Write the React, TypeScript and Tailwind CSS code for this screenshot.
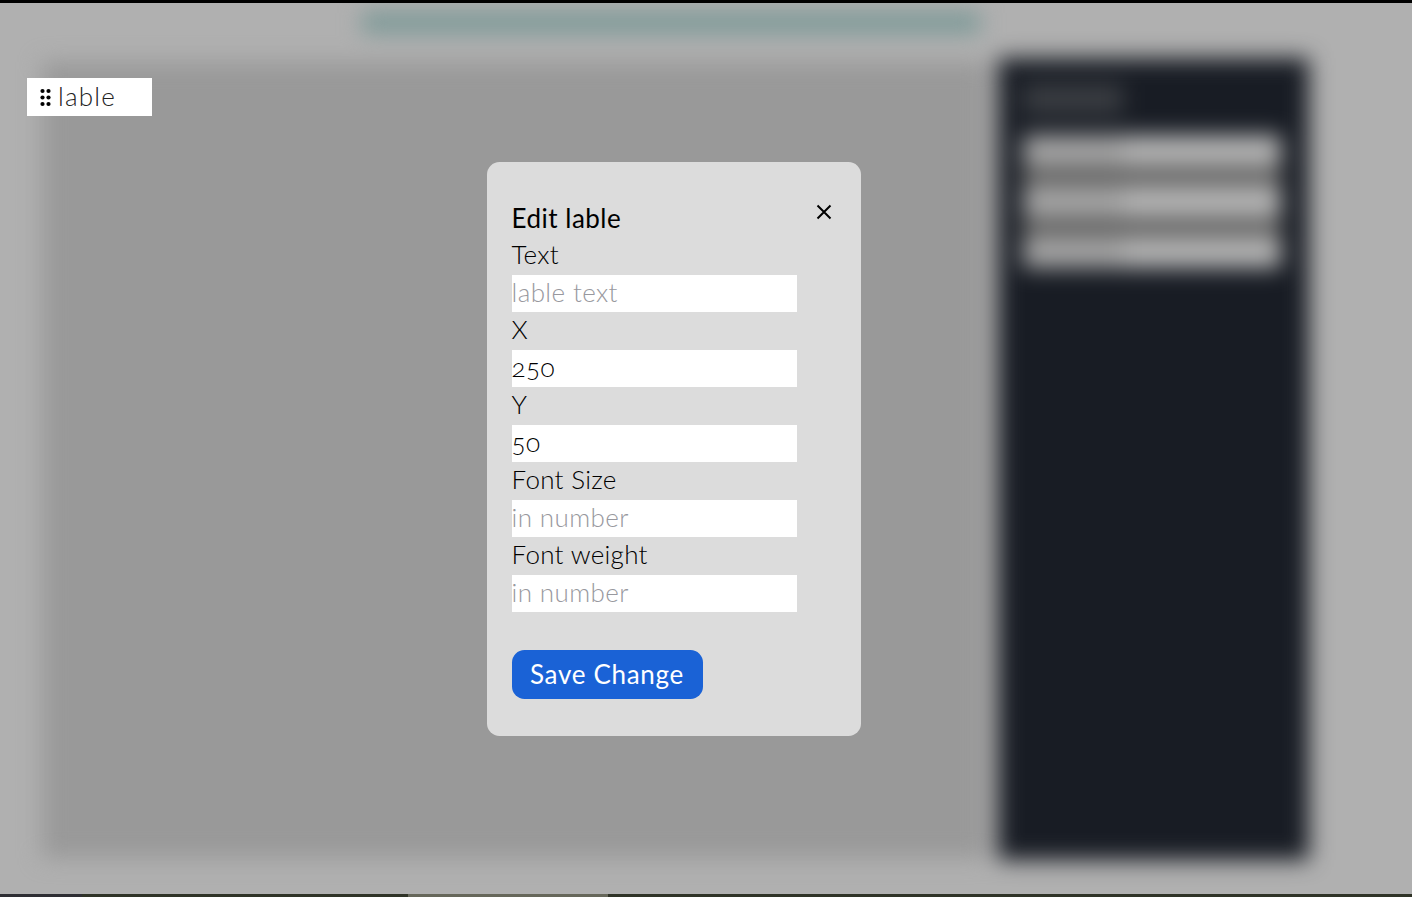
const font = { fontFamily: '"Lato", "Noto Sans", sans-serif' };

function Field({ label, placeholder, value }: { label: string; placeholder?: string; value?: string }) {
  return (
    <div className="flex flex-col">
      <label className="h-[37.5px] text-[26px] leading-[34px] font-light tracking-[0.3px] text-black">{label}</label>
      <input
        readOnly
        placeholder={placeholder}
        value={value ?? ""}
        className="h-[37.5px] w-[285px] bg-white p-0 pb-[2px] text-[26px] font-light tracking-[0.4px] text-black oldstyle-nums outline-none placeholder:text-[#98989e]"
      />
    </div>
  );
}

function SideInput() {
  return (
    <div className="flex h-[31px] w-[258px] rounded-[4px] bg-[#b4b4b4]">
      <div className="h-full w-[100px] rounded-l-[4px] bg-[#a4a4a4]" />
    </div>
  );
}

export default function App() {
  return (
    <div className="relative flex h-[897px] w-[1412px] flex-col overflow-hidden bg-[#b0b0b0]" style={font}>
      <div className="z-10 h-[3px] w-full shrink-0 bg-black" />

      <div className="flex min-h-0 flex-1 flex-col blur-[11px]">
        <div className="flex h-[55px] shrink-0 justify-start pl-[362px] pt-[9px]">
          <div className="h-[21px] w-[618px] bg-[#7b9997]" />
        </div>
        <div className="flex h-[802px] shrink-0 gap-[11px] pl-[42px]">
          <div className="mt-[4px] mb-[2px] w-[945px] bg-[#999999]" />
          <div className="flex h-full w-[311px] flex-col bg-[#181c24] px-[25px] pt-[26px]">
            <div className="mb-[21px] h-[30px] w-[100px] bg-[#3a3d42]" />
            <div className="flex w-[258px] flex-col gap-[20px] bg-[#606060]">
              <SideInput />
              <SideInput />
              <SideInput />
            </div>
          </div>
        </div>
      </div>

      <div className="z-10 flex h-[3px] w-full shrink-0">
        <div className="w-[82px] bg-[#2e2e33]" />
        <div className="w-[326px] bg-[#2f3327]" />
        <div className="w-[200px] bg-[#66675a]" />
        <div className="flex-1 bg-[#2f3327]" />
      </div>

      <div className="absolute left-[27px] top-[78px] flex h-[38px] w-[125px] items-center bg-white pl-[12px]">
        <svg width="13" height="19" viewBox="0 0 13 19" className="shrink-0 text-black" fill="currentColor">
          <circle cx="3.5" cy="3" r="2.1" />
          <circle cx="9.5" cy="3" r="2.1" />
          <circle cx="3.5" cy="9.5" r="2.1" />
          <circle cx="9.5" cy="9.5" r="2.1" />
          <circle cx="3.5" cy="16" r="2.1" />
          <circle cx="9.5" cy="16" r="2.1" />
        </svg>
        <span className="ml-[6px] text-[26px] font-light leading-[37.5px] tracking-[1.2px] text-[#222222]">lable</span>
      </div>

      <div className="absolute left-[486.5px] top-[162px] h-[574px] w-[374.5px] rounded-[12.5px] bg-[#dcdcdc] px-[25px] py-[37.5px]">
        <button className="absolute right-[28.5px] top-[41px] text-black" aria-label="Close">
          <svg width="18" height="18" viewBox="0 0 18 18" fill="none" stroke="currentColor" strokeWidth="2" className="block">
            <path d="M2.5 2.5 15.5 15.5M15.5 2.5 2.5 15.5" />
          </svg>
        </button>
        <h2 className="h-[37.5px] text-[26px] font-normal leading-[36px] tracking-[0.5px] text-black">Edit lable</h2>
        <Field label="Text" placeholder="lable text" />
        <Field label="X" value="250" />
        <Field label="Y" value="50" />
        <Field label="Font Size" placeholder="in number" />
        <Field label="Font weight" placeholder="in number" />
        <button className="mt-[37.5px] h-[49.5px] w-[191px] rounded-[12.5px] bg-[#1a62d6] text-[26px] font-normal leading-[37.5px] tracking-[0.7px] text-white">
          Save Change
        </button>
      </div>
    </div>
  );
}
